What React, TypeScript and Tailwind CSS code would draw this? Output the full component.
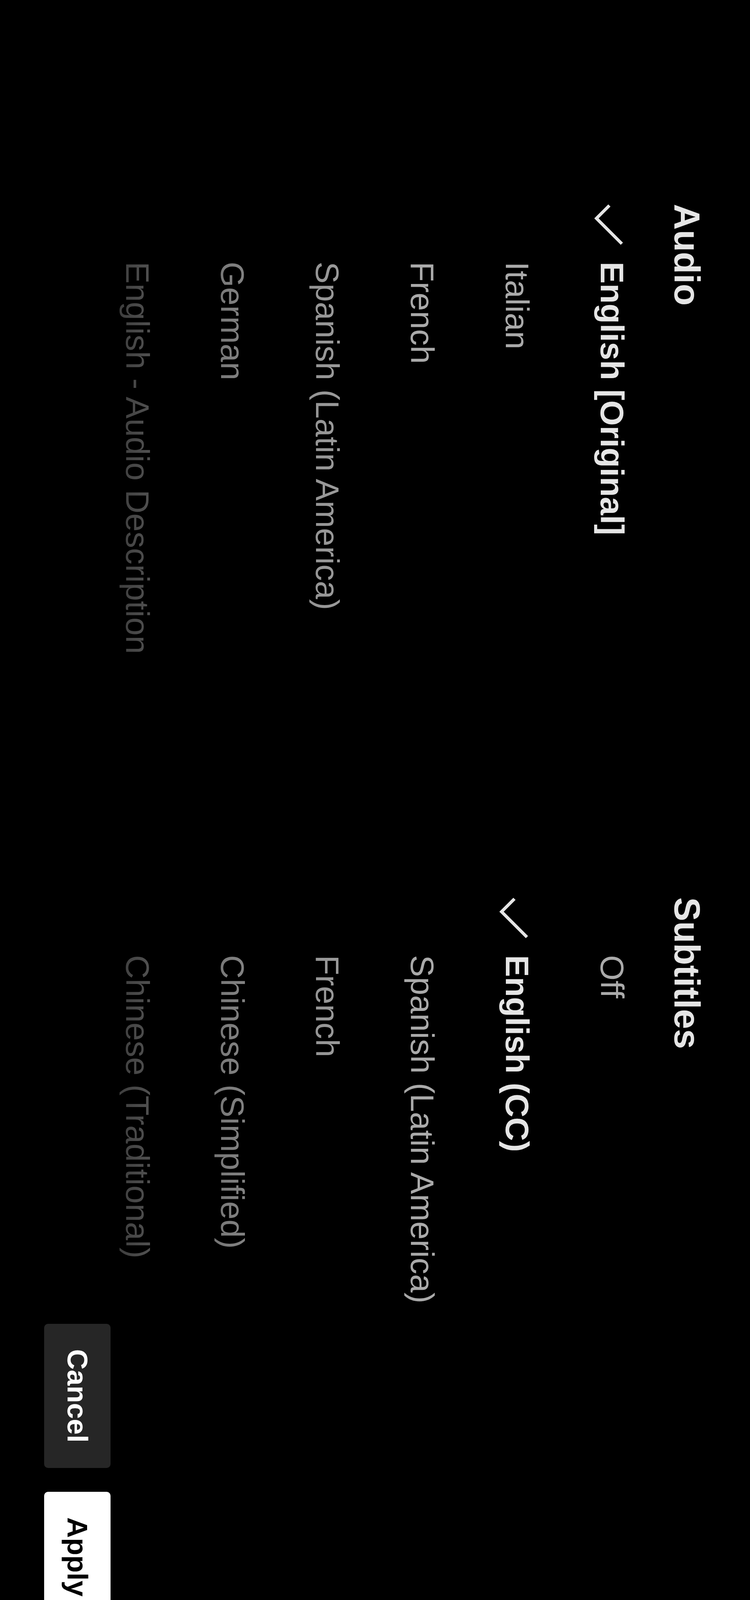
import React from "react";

type Track = { label: string; selected?: boolean };

const audioTracks: Track[] = [
  { label: "English [Original]", selected: true },
  { label: "Italian" },
  { label: "French" },
  { label: "Spanish (Latin America)" },
  { label: "German" },
  { label: "English - Audio Description" },
];

const subtitleTracks: Track[] = [
  { label: "Off" },
  { label: "English (CC)", selected: true },
  { label: "Spanish (Latin America)" },
  { label: "French" },
  { label: "Chinese (Simplified)" },
  { label: "Chinese (Traditional)" },
];

const Check = () => (
  <svg width="106" height="76" viewBox="0 0 106 76" fill="none" className="mt-[15px]">
    <polyline points="4,37 37,70 102,5" stroke="#e5e5e5" strokeWidth="8" strokeLinejoin="miter" />
  </svg>
);

const TrackList = ({ title, tracks }: { title: string; tracks: Track[] }) => (
  <div className="flex flex-col pt-[115px]">
    <h2 className="text-[92px] font-bold leading-none text-[#e5e5e5]">{title}</h2>
    <div className="mt-[25px] h-[1558px] overflow-hidden [mask-image:linear-gradient(to_bottom,#000_611px,rgb(0_0_0/0.89)_853px,rgb(0_0_0/0.74)_1095px,rgb(0_0_0/0.43)_1336px,rgb(0_0_0/0.1)_1558px)]">
      {tracks.map((track, index) => (
        <div key={index} className="flex h-[243px] items-center leading-[243px] whitespace-nowrap">
          <div className="flex w-[148px] shrink-0 items-center">{track.selected && <Check />}</div>
          <span
            className={
              track.selected
                ? "text-[84px] font-bold text-[#e5e5e5]"
                : "text-[84px] text-[#aaaaaa]"
            }
          >
            {track.label}
          </span>
        </div>
      ))}
    </div>
  </div>
);

export default function App() {
  return (
    <div className="h-[4266px] w-[1920px] overflow-hidden bg-black font-['Liberation_Sans',Arial,sans-serif]">
      {/* the player dialog is landscape, the screenshot was taken in portrait */}
      <div className="flex h-[1920px] w-[4266px] origin-top-left translate-x-[1920px] rotate-90 bg-black pl-[522px] pr-[114px]">
        <div className="w-[1775px] shrink-0">
          <TrackList title="Audio" tracks={audioTracks} />
        </div>
        <div className="flex-1">
          <TrackList title="Subtitles" tracks={subtitleTracks} />
        </div>
        <div className="mb-[113px] flex gap-[61px] self-end">
          <button className="h-[170px] rounded-[10px] bg-[#262626] px-[65px] text-[73px] font-bold text-white">
            Cancel
          </button>
          <button className="h-[170px] rounded-[10px] bg-white px-[65px] text-[73px] font-bold text-black">
            Apply
          </button>
        </div>
      </div>
    </div>
  );
}
